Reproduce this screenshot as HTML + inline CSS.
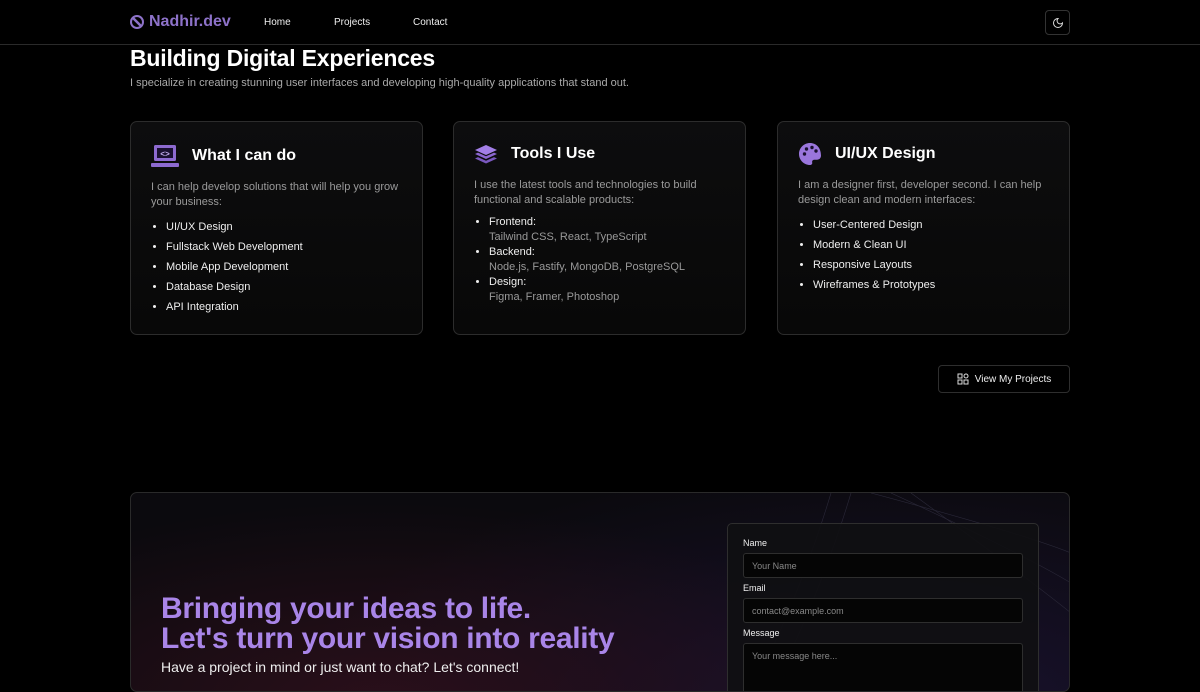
<!DOCTYPE html>
<html><head><meta charset="utf-8"><style>
*{box-sizing:border-box;margin:0;padding:0}
body{width:1200px;height:675px;overflow:hidden;background:#000;font-family:"Liberation Sans",sans-serif;color:#fff;position:relative}
.nav{position:absolute;top:0;left:0;width:1200px;height:45px;border-bottom:1px solid #2a2a2a}
.logo{position:absolute;left:130px;top:13px;font-size:16px;font-weight:bold;color:#8d72c9;display:flex;align-items:center;gap:5px}
.nl{position:absolute;top:17px;font-size:10px;color:#eee}
.theme{position:absolute;left:1045px;top:10px;width:25px;height:25px;border:1px solid #333;border-radius:4px;display:flex;align-items:center;justify-content:center}
h1{position:absolute;left:130px;top:45px;font-size:23px;font-weight:bold;letter-spacing:-0.2px}
.sub{position:absolute;left:130px;top:77px;font-size:11px;color:#aaa}
.card{position:absolute;top:121px;width:293px;height:214px;border:1px solid #2c2c2c;border-radius:7px;background:linear-gradient(180deg,#0d0d0e,#080808);padding:0 20px}
.ch{display:flex;align-items:center;gap:13px;font-size:16px;font-weight:bold;margin-top:20px}
.cp{font-size:11px;color:#9a9a9a;line-height:15px;margin-top:12px}
ul{margin-top:7px;padding-left:15px;font-size:11px;color:#eee;line-height:20px}
ul.t{line-height:15px}
ul.t span{color:#999}
.btn{position:absolute;left:938px;top:365px;width:132px;height:28px;border:1px solid #2e2e2e;border-radius:4px;font-size:10px;display:flex;align-items:center;justify-content:center;gap:6px;color:#eee}
.contact{position:absolute;left:130px;top:492px;width:940px;height:200px;border:1px solid #2a2a2a;border-radius:7px;overflow:hidden;background:radial-gradient(ellipse 500px 200px at 250px 210px,#2a0f1a,transparent),radial-gradient(ellipse 600px 250px at 750px 220px,#1a1230,transparent),#0b0a0e}
.big{position:absolute;left:30px;top:101px;font-size:30px;font-weight:bold;color:#a985e8;line-height:30px;letter-spacing:-0.3px}
.cs{position:absolute;left:30px;top:166px;font-size:14px;color:#eee}
.form{position:absolute;left:596px;top:30px;width:312px;height:200px;border:1px solid #2e2e2e;border-radius:5px;background:rgba(15,15,18,.9);padding:0 15px}
.lb{font-size:9px;line-height:11px;color:#eee;margin-top:5px}
.in{height:25px;border:1px solid #2e2e2e;border-radius:3px;background:#050505;font-size:9px;color:#888;padding:7px 8px;margin-top:4px}
</style></head><body>
<div class="nav">
<div class="logo"><svg width="14" height="14" viewBox="0 0 14 14"><circle cx="7" cy="7" r="6" fill="none" stroke="#8d72c9" stroke-width="2"/><path d="M3 3L11 11" stroke="#8d72c9" stroke-width="2.5"/></svg>Nadhir.dev</div>
<div class="nl" style="left:264px">Home</div><div class="nl" style="left:334px">Projects</div><div class="nl" style="left:413px">Contact</div>
<div class="theme"><svg width="12" height="12" viewBox="0 0 24 24"><path d="M12 3a6 6 0 0 0 9 9 9 9 0 1 1-9-9Z" fill="none" stroke="#ddd" stroke-width="2"/></svg></div>
</div>
<h1>Building Digital Experiences</h1>
<div class="sub">I specialize in creating stunning user interfaces and developing high-quality applications that stand out.</div>

<div class="card" style="left:130px"><div class="ch" style="margin-top:22px"><svg width="28" height="24" viewBox="0 0 28 24"><rect x="3" y="1" width="22" height="16" rx="1.5" fill="#8d6ad0"/><rect x="6" y="4" width="16" height="10" fill="#1a1030"/><text x="14" y="12.5" font-size="8" fill="#c9b3f5" text-anchor="middle" font-family="Liberation Mono">&lt;&gt;</text><rect x="0" y="19" width="28" height="4" rx="1" fill="#8d6ad0"/></svg>What I can do</div>
<div class="cp">I can help develop solutions that will help you grow your business:</div>
<ul><li>UI/UX Design</li><li>Fullstack Web Development</li><li>Mobile App Development</li><li>Database Design</li><li>API Integration</li></ul></div>

<div class="card" style="left:453px"><div class="ch"><svg width="24" height="24" viewBox="0 0 24 24"><path d="M12 13l11-5-11-5-11 5z" fill="#a27ee6"/><path d="M1 12l11 5 11-5-3-1.4-8 3.6-8-3.6z" fill="#8b66d0"/><path d="M1 16.5l11 5 11-5-3-1.4-8 3.6-8-3.6z" fill="#7a58bf"/></svg>Tools I Use</div>
<div class="cp">I use the latest tools and technologies to build functional and scalable products:</div>
<ul class="t"><li>Frontend:<br><span>Tailwind CSS, React, TypeScript</span></li><li>Backend:<br><span>Node.js, Fastify, MongoDB, PostgreSQL</span></li><li>Design:<br><span>Figma, Framer, Photoshop</span></li></ul></div>

<div class="card" style="left:777px"><div class="ch"><svg width="24" height="24" viewBox="0 0 24 24"><path d="M12 1C5.9 1 1 5.9 1 12s4.9 11 11 11c1.7 0 2.5-1.2 2.2-2.5-.4-1.6.6-2.8 2.2-2.8H19c2.2 0 4-1.8 4-4C23 5.4 18 1 12 1z" fill="#9a76dc"/><circle cx="6.5" cy="12" r="1.7" fill="#1a1030"/><circle cx="8.5" cy="7" r="1.7" fill="#1a1030"/><circle cx="14" cy="5.5" r="1.7" fill="#1a1030"/><circle cx="18" cy="9" r="1.7" fill="#1a1030"/></svg>UI/UX Design</div>
<div class="cp">I am a designer first, developer second. I can help design clean and modern interfaces:</div>
<ul><li>User-Centered Design</li><li>Modern &amp; Clean UI</li><li>Responsive Layouts</li><li>Wireframes &amp; Prototypes</li></ul></div>

<div class="btn"><svg width="12" height="12" viewBox="0 0 12 12" fill="none" stroke="#ddd" stroke-width="1"><rect x="1" y="1" width="4" height="4"/><rect x="7" y="1" width="4" height="4" rx="2"/><rect x="1" y="7" width="4" height="4"/><rect x="7" y="7" width="4" height="4"/></svg>View My Projects</div>

<div class="contact">
<svg style="position:absolute;left:560px;top:0" width="380" height="200" viewBox="0 0 380 200" fill="none" stroke="#2a2838" stroke-width="0.6"><path d="M140 0 Q110 100 60 200"/><path d="M160 0 Q130 100 80 200"/><path d="M180 0 Q330 40 380 60"/><path d="M200 0 Q330 60 380 90"/><path d="M220 0 Q330 80 380 120"/></svg>
<div class="big">Bringing your ideas to life.<br>Let's turn your vision into reality</div>
<div class="cs">Have a project in mind or just want to chat? Let's connect!</div>
<div class="form">
<div class="lb" style="margin-top:14px">Name</div><div class="in">Your Name</div>
<div class="lb">Email</div><div class="in">contact@example.com</div>
<div class="lb">Message</div><div class="in" style="height:60px">Your message here...</div>
</div></div>
</body></html>
